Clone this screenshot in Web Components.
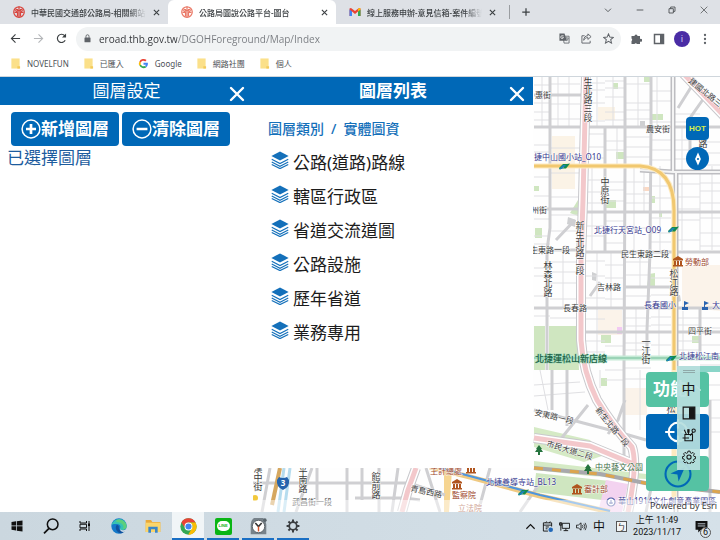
<!DOCTYPE html>
<html lang="zh-Hant">
<head>
<meta charset="utf-8">
<meta name="viewport" content="width=device-width, initial-scale=1">
<title>公路局圖說公路平台-圖台</title>
<style>
  html, body {
    height: 100%;
    margin: 0;
  }

  body {
    background: white;
    font-family: 'Noto Sans', 'Noto Sans CJK TC', sans-serif;
    overflow: hidden;
  }
</style>
</head>
<body>
<eroad-app></eroad-app>

<script>
const ICONS = {
  seal: '<circle cx="12" cy="12" r="10.5" fill="none" stroke="currentColor" stroke-width="2.5"/><path d="M12 1v22M5 6l7 4 7-4M3 13h6v8M21 13h-6v8M4 9l5 3M20 9l-5 3M9 6v5M15 6v5" fill="none" stroke="currentColor" stroke-width="2.4"/>',
  close: '<path d="M5 5l14 14M19 5L5 19" fill="none" stroke="currentColor" stroke-width="3"/>',
  cross: '<path d="M3 3l18 18M21 3L3 21" fill="none" stroke="currentColor" stroke-width="3.6" stroke-linecap="round"/>',
  gmail: '<path d="M1 5v15h5V11l6 5 6-5v9h5V5l-3-1-8 6-8-6z" fill="#ea4335"/><path d="M1 7v13h5V11z" fill="#4285f4"/><path d="M23 7v13h-5V11z" fill="#34a853"/><path d="M18 6v5l5-4V5l-2-1z" fill="#fbbc04"/>',
  plus: '<path d="M12 3v18M3 12h18" fill="none" stroke="currentColor" stroke-width="3"/>',
  chevron: '<path d="M3 8l9 9 9-9" fill="none" stroke="currentColor" stroke-width="2.4"/>',
  caret: '<path d="M3 17l9-9 9 9" fill="none" stroke="currentColor" stroke-width="2.6"/>',
  minimize: '<path d="M2 12h20" fill="none" stroke="currentColor" stroke-width="2.4"/>',
  restore: '<path d="M3 8h13v13H3zM8 8V3h13v13h-5" fill="none" stroke="currentColor" stroke-width="2.4"/>',
  quit: '<path d="M2 2l20 20M22 2L2 22" fill="none" stroke="currentColor" stroke-width="2"/>',
  back: '<path d="M22 12H4M12 3l-9 9 9 9" fill="none" stroke="currentColor" stroke-width="2.4"/>',
  forward: '<path d="M2 12h18M12 3l9 9-9 9" fill="none" stroke="currentColor" stroke-width="2.4"/>',
  reload: '<path d="M20 16a9 9 0 1 1-1-10l2 2" fill="none" stroke="currentColor" stroke-width="2.6"/><path d="M22 1v9h-9z" fill="currentColor"/>',
  lock: '<rect x="4" y="9" width="16" height="13" rx="1.5" fill="currentColor"/><path d="M8 10V6a4 4 0 0 1 8 0v4" fill="none" stroke="currentColor" stroke-width="2.4"/>',
  translate: '<path d="M9 7h13v15H11z" fill="none" stroke="currentColor" stroke-width="1.8"/><path d="M1 1h11l5 16H1z" fill="currentColor"/><path d="M10 6H6.500a3 3 0 1 0 3.200 3.200H7" fill="none" stroke="#fff" stroke-width="1.600"/><path d="M14 11h7M17 9v2M20 11c0 3-2 5-4 6M16 12c1 3 3 4 4 5" fill="none" stroke="currentColor" stroke-width="1.500"/>',
  share: '<path d="M8 6H2v16h18v-5" fill="none" stroke="currentColor" stroke-width="2"/><path d="M15 2l7 6-7 6v-4c-5 0-7 2-9 6 0-6 3-10 9-10z" fill="none" stroke="currentColor" stroke-width="2"/>',
  star: '<path d="M12 2l3 7 7.500.6-5.700 5L18.600 22 12 18l-6.600 4 1.800-7.400-5.700-5L9 9z" fill="none" stroke="currentColor" stroke-width="2.2"/>',
  puzzle: '<path d="M3 6h6a3 3 0 1 1 6 0h5v6a3 3 0 1 1 0 5v5h-6a3 3 0 0 0-5 0H3v-6a3 3 0 0 0 0-5z" fill="currentColor"/>',
  sidebar: '<path d="M3 3h18v18H3z" fill="none" stroke="currentColor" stroke-width="3"/><path d="M14 3h7v18h-7z" fill="currentColor"/>',
  dots: '<circle cx="12" cy="4" r="2.3" fill="currentColor"/><circle cx="12" cy="12" r="2.3" fill="currentColor"/><circle cx="12" cy="20" r="2.3" fill="currentColor"/>',
  folder: '<path d="M3 1h18v22H3z" fill="#fbe08a"/><path d="M16 18h6v5h-6z" fill="#f3ca5a"/>',
  google: '<path d="M21.500 10.500H12v4h5.400A6 6 0 0 1 15 17.300l3.200 2.700c2.700-2.500 3.900-5.800 3.300-9.500z" fill="#4285f4"/><path d="M3 16.600a10 10 0 0 0 15.200 3.400L15 17.300a6 6 0 0 1-8.700-3z" fill="#34a853"/><path d="M3 16.600a10 10 0 0 1 0-9.200l3.300 2.400a6 6 0 0 0 0 4.500z" fill="#fbbc04"/><path d="M3 7.400A10 10 0 0 1 18.700 4.600l-2.900 2.900a6 6 0 0 0-9.500 2.300z" fill="#ea4335"/>',
  add: '<circle cx="12" cy="12" r="10.700" fill="none" stroke="currentColor" stroke-width="1.800"/><path d="M12 6v12M6 12h12" fill="none" stroke="currentColor" stroke-width="3.200"/>',
  remove: '<circle cx="12" cy="12" r="10.700" fill="none" stroke="currentColor" stroke-width="1.800"/><path d="M5.500 12h13" fill="none" stroke="currentColor" stroke-width="3"/>',
  layers: '<path d="M12 0.500l11.500 6L12 12.500l-11.500-6z" fill="currentColor"/><path d="M1 11l11 5.700L23 11M1 14.700l11 5.700 11-5.700M1 18l11 5.500L23 18" fill="none" stroke="currentColor" stroke-width="1.500"/>',
  compass: '<path d="M12 1l5 11-5 11-5-11z" fill="#fff"/><circle cx="12" cy="12" r="1.800" fill="#0068b7"/>',
  target: '<circle cx="12" cy="12" r="8" fill="none" stroke="currentColor" stroke-width="1.800"/><path d="M12 1v8M12 15v8M1 12h8M15 12h8" fill="none" stroke="currentColor" stroke-width="1.800"/>',
  locate: '<circle cx="12" cy="12" r="10.700" fill="none" stroke="currentColor" stroke-width="1.800"/><path d="M18 6L5.500 11.500l6 1 1 6z" fill="currentColor"/>',
  half: '<path d="M2 2h20v20H2z" fill="none" stroke="currentColor" stroke-width="2"/><path d="M12 2h10v20H12z" fill="currentColor"/>',
  pen: '<path d="M5 11h13v11H5zM8 12L4 3M11 11V4M14 13l5-6M1 17h11" fill="none" stroke="currentColor" stroke-width="1.800"/><circle cx="20" cy="4.500" r="2.800" fill="none" stroke="currentColor" stroke-width="1.800"/><path d="M9 2h4v6H9z" fill="currentColor"/>',
  gear: '<path d="M10 1.500h4l.6 3.200 2.300 1 2.700-1.800 2.700 2.700-1.800 2.700 1 2.200 3 .6v3.800l-3 .6-1 2.200 1.800 2.700-2.700 2.700-2.700-1.800-2.300 1-.6 3h-4l-.6-3-2.300-1-2.700 1.800-2.700-2.700 1.800-2.700-1-2.200-3-.6v-3.800l3-.6 1-2.200L1.700 6.600l2.700-2.700 2.700 1.800 2.300-1z" transform="translate(1.200 .6) scale(.9)" fill="none" stroke="currentColor" stroke-width="1.800"/><circle cx="12" cy="12" r="3.600" fill="none" stroke="currentColor" stroke-width="1.800"/>',
  cog: '<circle cx="12" cy="12" r="6.500" fill="none" stroke="currentColor" stroke-width="3"/><path d="M12 1v4M12 19v4M1 12h4M19 12h4M4.200 4.200L7 7M17 17l2.800 2.800M19.800 4.200L17 7M7 17l-2.800 2.800" stroke="currentColor" stroke-width="3.400"/>',
  windows: '<path d="M1 4l9-1.300V11H1zM11.500 2.500L23 1v10H11.500zM1 12.500h9V21l-9-1.300zM11.500 12.500H23V23l-11.500-1.500z" fill="currentColor"/>',
  search: '<circle cx="14.500" cy="9.500" r="8" fill="none" stroke="currentColor" stroke-width="2.300"/><path d="M9 15.500L1.500 23" stroke="currentColor" stroke-width="2.600"/>',
  taskview: '<path d="M2 2v4h13V2M2 22v-4h13v4M2 8.500h13v7H2zM20 2v20" fill="none" stroke="currentColor" stroke-width="2"/><path d="M18 7h4v5h-4z" fill="currentColor"/>',
  edge: '<circle cx="12" cy="12" r="11.500" fill="#1479c9"/><path d="M.7 11A11.500 11.500 0 0 1 23.500 12c0 4-3 6-6.500 6-3 0-4-1.400-3.500-2.700 1.300-1.700 1-5.300-3-6C6 8.500 2 9 .7 11z" fill="#36c2b4"/><path d="M8 3a11.500 11.500 0 0 1 15.500 9c0 4-3 5.500-6 5.500 3-4 .5-11-9.500-11.500z" fill="#69d36b" opacity=".75"/><path d="M9 10c-4 4-1 11 5 12.800 3 .4 6-2 7.500-4.300-3 1.600-9 1.500-9.700-2.600C11.300 13 13 12 9 10z" fill="#11519d"/><path d="M13.500 17c3 2 7 1.500 9 0l1 3-5 1c-3 0-5-2-5-4z" fill="#cfdbe3"/>',
  explorer: '<path d="M1 3h8l2 3h12v15H1z" fill="#e9a93b"/><path d="M1 7h22v14H1z" fill="#fbd56b"/><path d="M5 13h14v9h-4v-5H9v5H5z" fill="#3b86c8"/>',
  chrome: '<circle cx="12" cy="12" r="11.500" fill="#34a853"/><path d="M2 6.200A11.500 11.500 0 0 1 22 6.500H12a5.500 5.500 0 0 0-5 8z" fill="#ea4335"/><path d="M22 6.500A11.500 11.500 0 0 1 11.500 23.500l5-8.500A5.500 5.500 0 0 0 14 6.500z" fill="#fbbc04"/><circle cx="12" cy="12" r="5.600" fill="#fff"/><circle cx="12" cy="12" r="4.300" fill="#4285f4"/>',
  clock: '<path d="M1 23V9a11 11 0 0 1 22 0v14z" fill="#77828a"/><circle cx="12" cy="12" r="8.800" fill="#fff" stroke="#4d565c" stroke-width="1.200"/><path d="M7.500 7l4.500 5 4.500-5" fill="none" stroke="#333" stroke-width="2.200"/><path d="M12 12v7" stroke="#d9572d" stroke-width="2"/><circle cx="21" cy="3" r="2.500" fill="#59646b"/>',
  input: '<path d="M13 22H3V4h18v8M3 9h18" fill="none" stroke="currentColor" stroke-width="2"/><path d="M8 4l2-3M16 4l2-3M8 13h7M8 17h4" stroke="currentColor" stroke-width="2"/><circle cx="19" cy="19" r="5" fill="#2067b8"/>',
  network: '<path d="M7 5h16v11H7zM15 16v5M10 21h10M4 3v18M1 4h5v5H1z" fill="none" stroke="currentColor" stroke-width="2"/>',
  sound: '<path d="M1 9h4l6-5v16l-6-5H1z" fill="none" stroke="currentColor" stroke-width="1.800"/><path d="M14 9q2 3 0 6M17 6q4.500 6 0 12M20 4q6 8 0 16" fill="none" stroke="currentColor" stroke-width="1.600"/>',
  notice: '<path d="M1 2h22v16H11l-5 5v-5H1z" fill="currentColor"/><path d="M5 7h14M5 11h14" stroke="#cfdbe4" stroke-width="1.600"/>'
};

class Icon extends HTMLElement {
  static get observedAttributes() {
    return [ 'name' ];
  }

  constructor() {
    super();
    this.attachShadow( {mode: 'open'} );
  }

  attributeChangedCallback( name, old, value ) {
    this.shadowRoot.innerHTML = `
      <style>
        :host { display: inline-block; flex: none; height: 12px; width: 12px; }
        svg { display: block; height: 100%; width: 100%; }
      </style>
      <svg viewBox="0 0 24 24" aria-hidden="true">${ICONS[value]}</svg>
    `;
  }
}

window.customElements.define( 'er-icon', Icon );

// One tab of the browser window
class BrowserTab extends HTMLElement {
  constructor() {
    super();
    this.attachShadow( {mode: 'open'} ).innerHTML = `
      <style>
        :host {
          align-items: center;
          box-sizing: border-box;
          color: #3c4043;
          display: flex;
          flex: 0 1 168px;
          font-size: 8px;
          gap: 6px;
          min-width: 0;
          padding: 0 7px 0 13px;
        }
        :host( [active] ) {
          background: white;
          border-radius: 6px 6px 0 0;
        }
        button {
          background: none;
          border: none;
          color: inherit;
          font: inherit;
          padding: 0;
        }
        .title {
          flex: 1;
          font-weight: 500;
          -webkit-mask-image: linear-gradient( to right, black 85%, transparent );
          mask-image: linear-gradient( to right, black 85%, transparent );
          min-width: 0;
          overflow: hidden;
          text-align: left;
          white-space: nowrap;
        }
        .close er-icon { display: block; height: 9px; width: 9px; }
      </style>
      <slot name="icon"></slot>
      <button class="title" type="button"><slot></slot></button>
      <button class="close" type="button" aria-label="關閉"><er-icon name="close"></er-icon></button>
    `;
  }
}

window.customElements.define( 'browser-tab', BrowserTab );

class BrowserChrome extends HTMLElement {
  constructor() {
    super();
    this.attachShadow( {mode: 'open'} ).innerHTML = `
      <style>
        :host { background: white; color: #3c4043; display: block; }
        button { background: none; border: none; color: inherit; display: flex; font: inherit; padding: 0; }
        .tabs { background: #dee1e6; display: flex; height: 24px; }
        .tabs .new { align-items: center; border-left: 1px solid #9a9da1; height: 14px; margin: 5px 0 5px 5px; padding-left: 11px; }
        .new er-icon { height: 10px; width: 10px; }
        .red { color: #d8463f; }
        .pale { color: #ea7a68; }
        .window { display: flex; align-items: center; gap: 24px; height: 20px; margin-left: auto; padding-right: 12px; }
        .window er-icon { height: 8px; width: 8px; }
        .bar { align-items: center; display: flex; gap: 9px; height: 29px; padding: 0 9px 0 10px; }
        .nav { display: flex; gap: 12px; }
        .nav er-icon { height: 11px; width: 11px; }
        .nav .off { color: #b4b6b9; }
        .address { align-items: center; background: #f1f3f4; border-radius: 12px; display: flex; flex: 1; gap: 11px; height: 24px; padding: 0 7px; }
        .address > er-icon { height: 9px; margin-right: -4px; width: 9px; color: #5f6368; }
        .address button { color: #5f6368; }
        .address button er-icon { height: 11px; width: 11px; }
        input {
          -webkit-background-clip: text;
          -webkit-text-fill-color: transparent;
          background-clip: text;
          background-image: linear-gradient( to right, #303236 78px, #777a7f 78px );
          border: none;
          color: #303236;
          flex: 1;
          font-family: 'Open Sans', sans-serif;
          font-size: 10px;
          min-width: 0;
          outline: none;
          padding: 0;
        }
        .tools { align-items: center; color: #5f6368; display: flex; gap: 11px; }
        .avatar { align-items: center; background: #4a2ca5; border-radius: 50%; color: #d7ccf2; font-size: 9px; height: 16px; justify-content: center; margin: 0 -2px; width: 16px; }
        nav { align-items: center; border-bottom: 1px solid #cfd6dc; display: flex; font-size: 8px; gap: 14px; height: 21px; padding: 0 0 2px 10px; }
        a { align-items: center; color: #4d5156; display: flex; gap: 6px; text-decoration: none; }
        nav er-icon { height: 11px; width: 11px; }
      </style>
      <div class="tabs">
        <browser-tab><er-icon slot="icon" name="seal" class="red"></er-icon>中華民國交通部公路局-相關網站</browser-tab>
        <browser-tab active><er-icon slot="icon" name="seal" class="pale"></er-icon>公路局圖說公路平台-圖台</browser-tab>
        <browser-tab><er-icon slot="icon" name="gmail"></er-icon>線上服務申辦-意見信箱-案件編號</browser-tab>
        <button class="new" type="button" aria-label="新分頁"><er-icon name="plus"></er-icon></button>
        <div class="window">
          <button type="button" aria-label="搜尋分頁"><er-icon name="chevron"></er-icon></button>
          <button type="button" aria-label="最小化"><er-icon name="minimize"></er-icon></button>
          <button type="button" aria-label="還原"><er-icon name="restore"></er-icon></button>
          <button type="button" aria-label="關閉視窗"><er-icon name="quit"></er-icon></button>
        </div>
      </div>
      <div class="bar">
        <div class="nav">
          <button type="button" aria-label="上一頁"><er-icon name="back"></er-icon></button>
          <button type="button" aria-label="下一頁" class="off"><er-icon name="forward"></er-icon></button>
          <button type="button" aria-label="重新載入"><er-icon name="reload"></er-icon></button>
        </div>
        <div class="address">
          <er-icon name="lock"></er-icon>
          <input type="text" aria-label="網址" value="eroad.thb.gov.tw/DGOHForeground/Map/Index">
          <button type="button" aria-label="翻譯"><er-icon name="translate"></er-icon></button>
          <button type="button" aria-label="分享"><er-icon name="share"></er-icon></button>
          <button type="button" aria-label="加入書籤"><er-icon name="star"></er-icon></button>
        </div>
        <div class="tools">
          <button type="button" aria-label="擴充功能"><er-icon name="puzzle"></er-icon></button>
          <button type="button" aria-label="側邊面板"><er-icon name="sidebar"></er-icon></button>
          <button type="button" class="avatar">i</button>
          <button type="button" aria-label="選單"><er-icon name="dots"></er-icon></button>
        </div>
      </div>
      <nav>
        <a href="#"><er-icon name="folder"></er-icon>NOVELFUN</a>
        <a href="#"><er-icon name="folder"></er-icon>已匯入</a>
        <a href="#"><er-icon name="google"></er-icon>Google</a>
        <a href="#"><er-icon name="folder"></er-icon>網路社團</a>
        <a href="#"><er-icon name="folder"></er-icon>個人</a>
      </nav>
    `;
  }
}

window.customElements.define( 'browser-chrome', BrowserChrome );

// White panel with a blue title bar
class SidePanel extends HTMLElement {
  constructor() {
    super();
    this.attachShadow( {mode: 'open'} ).innerHTML = `
      <style>
        :host { background: white; display: block; }
        header {
          align-items: center;
          background: #0068b7;
          color: white;
          display: grid;
          grid-template-columns: 32px 1fr 32px;
          height: 28px;
        }
        h2 { font-size: 17px; font-weight: var( --title-weight, 400 ); grid-column: 2; line-height: 28px; margin: 0; text-align: center; }
        button { background: none; border: none; color: inherit; padding: 6px 8px 0; }
        er-icon { display: block; height: 16px; width: 16px; }
      </style>
      <header>
        <h2><slot name="title"></slot></h2>
        <button type="button" aria-label="關閉"><er-icon name="cross"></er-icon></button>
      </header>
      <slot></slot>
    `;
  }
}

window.customElements.define( 'side-panel', SidePanel );

class LayerButton extends HTMLElement {
  constructor() {
    super();
    this.attachShadow( {mode: 'open'} ).innerHTML = `
      <style>
        :host { display: block; flex: 1; }
        button {
          align-items: center;
          background: #0068b7;
          border: none;
          border-radius: 4px;
          color: white;
          display: flex;
          font-family: inherit;
          font-size: 17px;
          font-weight: 700;
          height: 34px;
          justify-content: center;
          padding: 0 0 4px;
          white-space: nowrap;
          width: 100%;
        }
        er-icon { height: 20px; margin-top: 4px; width: 20px; }
      </style>
      <button type="button"><er-icon></er-icon><slot></slot></button>
    `;
  }

  connectedCallback() {
    this.shadowRoot.querySelector( 'er-icon' ).setAttribute( 'name', this.getAttribute( 'icon' ) );
  }
}

window.customElements.define( 'layer-button', LayerButton );

class LayerItem extends HTMLElement {
  constructor() {
    super();
    this.attachShadow( {mode: 'open'} ).innerHTML = `
      <style>
        :host { display: block; }
        a { align-items: center; box-sizing: border-box; color: #1c1c1c; display: flex; font-size: 17px; gap: 4px; height: 34px; padding-bottom: 6px; text-decoration: none; }
        er-icon { color: #1470ba; height: 18px; margin-bottom: 3px; width: 18px; }
      </style>
      <a href="#"><er-icon name="layers"></er-icon><slot></slot></a>
    `;
  }
}

window.customElements.define( 'layer-item', LayerItem );

// Street map, in its own canvas coordinates
const AREAS = [
  [ '#fbf3e6', '552,136 575,136 575,189 552,189' ],
  [ '#fbf3e6', '598,107 615,107 615,120 598,120' ],
  [ '#fbf3ea', '682,265 720,265 720,311 682,307' ],
  [ '#fbf3ea', '598,310 622,310 622,335 598,335' ],
  [ '#fbf3ea', '623,388 647,388 647,415 623,415' ],
  [ '#cfe6c0', '534,326 545,326 545,370 534,370' ],
  [ '#cfe6c0', '549,326 577,326 579,370 549,370' ],
  [ '#cfe6c0', '613,83 618,83 618,89 613,89' ],
  [ '#cfe6c0', '644,76 651,76 651,82 644,82' ],
  [ '#cfe6c0', '651,114 663,114 663,120 651,120' ],
  [ '#cfe6c0', '616,152 624,152 624,159 616,159' ],
  [ '#cfe6c0', '606,200 616,200 616,208 606,208' ],
  [ '#cfe6c0', '534,186 539,186 539,191 534,191' ],
  [ '#cfe6c0', '578,200 578,216 570,213' ],
  [ '#cfe6c0', '535,228 542,228 542,238 535,238' ],
  [ '#cfe6c0', '659,211 662,211 662,217 659,217' ],
  [ '#cfe6c0', '649,274 655,273 655,286 647,286' ],
  [ '#cfe6c0', '601,335 611,335 611,343 601,343' ],
  [ '#cfe6c0', '692,336 700,336 700,343 692,343' ],
  [ '#cfe6c0', '601,378 607,378 607,386 601,386' ],
  [ '#cfe6c0', '649,196 655,196 655,203 649,203' ],
  [ '#d5eac5', '534,427 590,440 602,456 584,462 534,447' ],
  [ '#d5eac5', '534,461 646,474 646,479 590,476 534,470' ],
  [ '#cfe6c0', '536,473 610,481 602,500 534,492' ],
  [ '#f3d3f0', '606,480 628,484 622,512 598,512' ],
  [ '#f2c9f3', '617,327 622,327 622,334 617,334' ],
  [ '#f6d591', '444,470 452,470 449,512 444,512' ],
  [ '#8ad5c8', '680,366 720,366 720,372 680,372' ],
  [ '#cfd0d2', '568,217 576,220 575,227 567,224' ],
  [ '#cfd0d2', '673,296 680,295 681,301 674,303' ],
  [ '#cfd0d2', '592,272 597,274 596,281 592,280' ],
  [ '#cfd0d2', '640,121 645,121 645,127 640,127' ],
  [ '#fbd9c4', '643,187 649,187 649,191 643,191' ]
];

// column left, column right, y of each lane in it
const LANES = [
  [ 534, 550, [ 85, 103, 112, 120, 145, 152, 177, 196, 219, 236, 244, 268, 276, 296, 316 ] ],
  [ 550, 580, [ 84, 104, 119, 148, 173, 197, 215, 231, 262, 272, 283, 299, 318 ] ],
  [ 586, 605, [ 83, 90, 103, 121, 134, 147, 158, 180, 192, 203, 226, 236, 261, 276, 298, 319, 341, 352 ] ],
  [ 605, 625, [ 81, 88, 97, 112, 120, 141, 150, 182, 190, 201, 221, 233, 243, 265, 278, 299, 346, 370, 380 ] ],
  [ 625, 651, [ 84, 103, 110, 119, 137, 147, 157, 182, 194, 203, 228, 262, 275, 296, 318, 326, 343, 350, 368, 379 ] ],
  [ 651, 671, [ 91, 101, 122, 140, 150, 160, 186, 198, 218, 233, 242, 268, 278, 295, 302, 317, 325, 345, 375 ] ],
  [ 675, 700, [ 114, 122, 140, 150, 159, 184, 197, 209, 220, 240, 318, 325, 341, 350 ] ],
  [ 700, 720, [ 142, 153, 165, 183, 191, 203, 218, 233, 246, 318, 328, 345, 365, 385, 400, 418, 432 ] ]
];

const ROADS = [
  'M550 76V228L547 250V370', 'M605 127V252', 'M625 76V166L624 370V460',
  'M651 76V127L650 252L647 330V358', 'M700 308V360', 'M534 127H720', 'M534 95H583',
  'M534 209H583', 'M586 212H720', 'M585 252H720', 'M534 250H583', 'M625 287H671', 'M534 308H720',
  'M583 332H720', 'M534 410L625 434L646 440', 'M552 370V410', 'M567 370V426', 'M588 405L560 440',
  'M608 434L618 420L625 400', 'M710 400V512', 'M646 512L655 470', 'M693 84L678 108', 'M704 98L690 118V166', 'M590 296L600 282', 'M556 240L575 220',
  'M270 468L262 512', 'M312 468L296 512', 'M347 468V512', 'M379 468V512', 'M253 483H412', 'M317 468V505', 'M398 468L392 512',
  'M355 498H405L420 500', 'M412 484L445 495', 'M362 468V500', 'M426 468L440 512', 'M490 468L480 505', 'M540 483L520 512'
];

const AVENUES = 'M586 76L583 200L581 260V340Q583 372 597 400Q612 425 632 447Q638 465 628 512M680 70L726 118M534 438L590 446L636 465M416 468L408 490L402 512';

const STREETS = [
  [ 535, 98, '惠街' ], [ 646, 132, '農安街' ], [ 523, 213, '錦州街' ], [ 522, 253, '民生東路一段' ],
  [ 621, 257, '民生東路二段' ], [ 597, 290, '吉林路' ], [ 563, 311, '長春路' ], [ 688, 334, '四平街' ],
  [ 588, 68, '新生北路三段', 'v' ], [ 605, 177, '中原街', 'v' ], [ 580, 221, '新生北路二段', 'v' ], [ 548, 261, '林森北路', 'v' ],
  [ 674, 269, '松江路', 'v' ], [ 646, 337, '一江街', 'v' ], [ 703, 139, '路', 'v' ],
  [ 671, 404, '松江路', 'v' ], [ 376, 472, '館前路', 'v' ],
  [ 688, 82, '建國北路三段', 39 ], [ 534, 415, '安東路一段', 13 ], [ 546, 446, '市民大道二段', 17 ], [ 595, 410, '新生北路一段', 51 ],
  [ 410, 491, '青島西路', 12 ], [ 292, 505, '武昌街一段' ], [ 258, 464, '漢中街', 'v' ], [ 303, 457, '延平南路', 'v' ]
];

const PLACES = [
  [ 534, 160, '捷中山國小站_O10', '#35378f' ], [ 594, 233, '北捷行天宮站_O09', '#35378f' ], [ 644, 308, '長春國小', '#35378f' ],
  [ 712, 308, '大', '#35378f' ], [ 679, 359, '北捷松江南京站', '#35378f' ], [ 486, 485, '北捷善導寺站_BL13', '#35378f' ],
  [ 618, 504, '華山1914文化創意產業園區', '#35378f' ], [ 685, 265, '勞動部', '#a0482c' ], [ 584, 492, '審計部', '#a0482c' ],
  [ 430, 474, '主計總處', '#a0482c' ], [ 452, 498, '監察院', '#a0482c' ], [ 458, 511, '立法院', '#a0482c' ],
  [ 595, 470, '中央藝文公園', '#3f7048' ]
];

const MARKS = {
  hall: '<path d="M-5-2L0-5l5 3v1.500H-5zM-4 0h2v4h-2zM-1 0h2v4h-2zM2 0h2v4H2zM-5 4H5v1.500H-5z" fill="#b0551e"/>',
  metro: '<path d="M-5 2l4-4h5L1 1h-3L-4 4zM-1 2l4-4 3-.5-4 5h-5z" fill="#138a50"/><path d="M-5 3l4-4h3l-4 4z" fill="#1b82b8"/>',
  tree: '<path d="M0-5L3-1H2L4 2H1v3h-2V2h-3l2-3h-1z" fill="#25733e"/>',
  flag: '<path d="M-1-5l5 2-4 2v2h3v3h-6V1h2z" fill="#2a64b0"/>',
  shield: '<path d="M-4-6Q0-4 4-6L6-3Q7 4 0 7-7 4-6-3z" fill="#2463ad"/><text y="3" text-anchor="middle" font-size="8" font-weight="700" fill="#fff">3</text>',
  ring: '<circle r="4" fill="#fff" stroke="#4a5aa5" stroke-width="1.200"/><path d="M-2 1h4M0-2v4" stroke="#4a5aa5"/>'
};

const PINS = [
  [ 'metro', 564, 166 ], [ 'metro', 673, 229 ], [ 'metro', 671, 358 ], [ 'metro', 523, 492 ],
  [ 'hall', 678, 261 ], [ 'hall', 577, 489 ], [ 'hall', 457, 484 ], [ 'hall', 471, 468 ],
  [ 'flag', 685, 306 ], [ 'flag', 705, 306 ], [ 'tree', 539, 450 ], [ 'tree', 588, 469 ],
  [ 'shield', 283, 483 ], [ 'ring', 611, 502 ]
];

class StreetMap extends HTMLElement {
  constructor() {
    super();
    const lanes = LANES.map( ( [ left, right, ys ] ) => ys.map( ( y ) => `M${left} ${y}H${right}` ).join( '' ) ).join( '' );
    const streets = STREETS.map( ( [ x, y, text, turn ] ) => {
      if( turn === 'v' ) {
        return `<text class="down" x="${x}" y="${y}">${text}</text>`;
      }
      return `<text transform="translate( ${x} ${y} ) rotate( ${turn || 0} )">${text}</text>`;
    } ).join( '' );

    this.attachShadow( {mode: 'open'} ).innerHTML = `
      <style>
        :host { display: block; overflow: hidden; }
        svg { display: block; height: 100%; width: 100%; }
        text { font-family: 'Noto Sans', 'Noto Sans CJK TC', sans-serif; font-size: 8px; paint-order: stroke; stroke: white; stroke-opacity: .8; stroke-width: 1px; }
        .streets { fill: #3c3c3c; }
        .down { font-size: 9px; writing-mode: vertical-rl; }
        .pins text { stroke: none; }
        .line { fill: #1c5f45; font-size: 9px; font-weight: 500; stroke: #9bd9b8; }
      </style>
      <svg viewBox="253 77 467 435" preserveAspectRatio="xMinYMin slice" role="img" aria-label="地圖">
        <rect x="253" y="77" width="467" height="435" fill="#fefefe"/>
        ${AREAS.map( ( [ fill, points ] ) => `<polygon fill="${fill}" points="${points}"/>` ).join( '' )}
        <path d="${lanes}M558 77V127M569 76V127M597 76V127M613 76V127M638 76V127M592 166V250M634 166V252M617 127V166M644 166V212M660 166V252M657 77V127M682 127V250M700 166V250M712 166V250M636 308V358M659 308V358M640 252V287M683 311V358M597 252V358M611 252V308M563 250V308M640 370V430M542 77V127M534 385L580 382M534 396L585 392M540 370L548 410M600 370V388" fill="none" stroke="#e0e0e3"/>
        <path d="${ROADS.join( '' )}" fill="none" stroke="#cfcfd2" stroke-width="3"/>
        <path d="M673 76V172M640 170L673 172H720M676 172V512" fill="none" stroke="#bdbdc1" stroke-width="5"/>
        <path d="M673 76V172M640 170L673 172H720M676 172V512" fill="none" stroke="#f4f4f4" stroke-width="2"/>
        <g fill="none" stroke-linejoin="round">
          <path d="${AVENUES}" stroke="#c8c8cc" stroke-width="10"/>
          <path d="${AVENUES}" stroke="#fff" stroke-width="8"/>
          <path d="${AVENUES}" stroke="#f3c8cb" stroke-width="5"/>
          <path d="M534 166H640Q674 168 674 210V500" stroke="#fdeac0" stroke-width="5"/>
          <path d="M534 166H640Q674 168 674 210V370" stroke="#f1c870" stroke-width="3"/>
          <path d="M534 358H720" stroke="#c5ead6" stroke-width="5"/>
          <path d="M534 358H720" stroke="#72bd98" stroke-width="1"/>
          <path d="M534 468L600 474L650 484L720 492" stroke="#a8a8ac" stroke-width="4"/>
          <path d="M534 468L600 474L650 484L720 492" stroke="#dca54e" stroke-width="3" stroke-dasharray="9 9"/>
          <path d="M430 467L470 477L540 496L610 512" stroke="#efc982" stroke-width="5"/>
          <path d="M440 468L540 495L610 511" stroke="#4d95de" stroke-width="2"/>
          <path d="M284 468L278 512M290 468L284 512" stroke="#b6dcee" stroke-width="3"/>
          <path d="M280 468L272 505" stroke="#d5a75f" stroke-width="4"/>
        </g>
        <circle cx="255" cy="498" r="3" fill="#f2c83c"/>
        <g class="streets">${streets}</g>
        ${PLACES.map( ( [ x, y, text, fill ] ) => `<text x="${x}" y="${y}" fill="${fill}">${text}</text>` ).join( '' )}
        <text class="line" x="535" y="362">北捷運松山新店線</text>
        <g class="pins">${PINS.map( ( [ mark, x, y ] ) => `<g transform="translate( ${x} ${y} )">${MARKS[mark]}</g>` ).join( '' )}</g>
      </svg>
    `;
  }
}

window.customElements.define( 'street-map', StreetMap );

// Buttons that float on the right edge of the map
class MapTools extends HTMLElement {
  constructor() {
    super();
    this.attachShadow( {mode: 'open'} ).innerHTML = `
      <style>
        :host { align-items: flex-end; display: flex; flex-direction: column; justify-content: space-between; }
        div { align-items: center; display: flex; flex-direction: column; gap: 7px; }
        button { align-items: center; background: #0068b7; border: none; border-radius: 4px; color: white; display: flex; font-family: inherit; justify-content: center; padding: 0; }
        .small button { height: 23px; width: 23px; }
        .small .hot { color: #d6ee4c; font-family: 'Liberation Sans', sans-serif; font-size: 8px; font-weight: 700; }
        .small .round { border-radius: 50%; }
        .small er-icon { height: 14px; width: 14px; }
        .large button { font-size: 17px; font-weight: 700; gap: 3px; height: 35px; width: 63px; }
        .large .menu { padding-bottom: 4px; }
        .large .teal { background: #55c2a3; }
        .large er-icon { height: 28px; width: 28px; }
        .large .teal er-icon { color: #0068b7; }
        .large .teal .caret { color: white; height: 12px; width: 12px; }
      </style>
      <div class="small">
        <button type="button" class="hot">HOT</button>
        <button type="button" class="round" aria-label="指北"><er-icon name="compass"></er-icon></button>
      </div>
      <div class="large">
        <button type="button" class="teal menu">功能<er-icon name="caret" class="caret"></er-icon></button>
        <button type="button" aria-label="定位"><er-icon name="target"></er-icon></button>
        <button type="button" class="teal" aria-label="目前位置"><er-icon name="locate"></er-icon></button>
      </div>
    `;
  }
}

window.customElements.define( 'map-tools', MapTools );

class InputBar extends HTMLElement {
  constructor() {
    super();
    this.attachShadow( {mode: 'open'} ).innerHTML = `
      <style>
        :host {
          align-items: center;
          background: rgba( 183, 223, 222, .93 );
          box-sizing: border-box;
          color: #161616;
          display: flex;
          flex-direction: column;
          height: 104px;
          justify-content: space-between;
          padding: 4px 0 6px;
          width: 23px;
        }
        button { background: none; border: none; color: inherit; display: block; font: 14px/16px 'Noto Sans', 'Noto Sans CJK TC', sans-serif; padding: 0; }
        i { border: solid #8fa9a9; border-width: 1px 0; height: 1px; width: 12px; }
        er-icon { display: block; height: 14px; width: 14px; }
      </style>
      <i></i>
      <button type="button">中</button>
      <button type="button" aria-label="半形"><er-icon name="half"></er-icon></button>
      <button type="button" aria-label="手寫"><er-icon name="pen"></er-icon></button>
      <button type="button" aria-label="設定"><er-icon name="gear"></er-icon></button>
    `;
  }
}

window.customElements.define( 'input-bar', InputBar );

class TaskBar extends HTMLElement {
  constructor() {
    super();
    this.attachShadow( {mode: 'open'} ).innerHTML = `
      <style>
        :host { background: linear-gradient( to right, #cbd7df, #d5e1e9 ); color: #111; display: flex; height: 28px; justify-content: space-between; }
        div { align-items: center; display: flex; }
        button { align-items: center; background: none; border: none; box-sizing: border-box; color: inherit; display: flex; font: inherit; height: 28px; justify-content: center; padding: 0; }
        .pinned button { width: 34px; }
        .pinned er-icon { height: 16px; width: 16px; }
        .pinned .slim er-icon { height: 12px; width: 12px; }
        .running { gap: 3px; margin-left: 2px; }
        .running button { border-bottom: 2px solid #1a6fc4; padding-top: 2px; width: 32px; }
        .running .active { background: #f1f5f7; }
        .running er-icon { height: 17px; width: 17px; }
        .running .cog { color: #3a3d40; height: 14px; width: 14px; }
        .line { align-items: center; background: #0ab515; border-radius: 2px; display: flex; height: 17px; justify-content: center; width: 17px; }
        .line b { background: white; border-radius: 6px; color: #0ab515; font: 700 4px/10px 'Liberation Sans', sans-serif; width: 13px; }
        .tray { gap: 6px; padding-right: 12px; }
        .tray er-icon { height: 11px; width: 11px; }
        .word { font: 12px/14px 'Noto Sans CJK TC', sans-serif; }
        .tray .box { background: #f2f5f7; border: 1px solid #555; font-size: 8px; height: 11px; margin: 0 0 0 5px; width: 11px; }
        time { font: 9px/12px Roboto, 'Noto Sans CJK TC', sans-serif; padding-bottom: 1px; text-align: center; }
        .tray .notes { margin-left: 8px; position: relative; }
        .tray .notes er-icon { height: 13px; width: 13px; }
        .count { background: #dde6ec; border: 1px solid #555; border-radius: 50%; bottom: 2px; font: 9px/9px Roboto, sans-serif; height: 9px; left: 5px; position: absolute; text-align: center; width: 9px; }
      </style>
      <div>
        <div class="pinned">
          <button type="button" class="slim" aria-label="開始"><er-icon name="windows"></er-icon></button>
          <button type="button" aria-label="搜尋"><er-icon name="search"></er-icon></button>
          <button type="button" class="slim" aria-label="工作檢視"><er-icon name="taskview"></er-icon></button>
          <button type="button" aria-label="Edge"><er-icon name="edge"></er-icon></button>
          <button type="button" aria-label="檔案總管"><er-icon name="explorer"></er-icon></button>
        </div>
        <div class="running">
          <button type="button" class="active" aria-label="Chrome"><er-icon name="chrome"></er-icon></button>
          <button type="button"><span class="line"><b>LINE</b></span></button>
          <button type="button" aria-label="時鐘"><er-icon name="clock"></er-icon></button>
          <button type="button" aria-label="設定"><er-icon name="cog" class="cog"></er-icon></button>
        </div>
      </div>
      <div class="tray">
        <button type="button" aria-label="顯示隱藏的圖示"><er-icon name="caret"></er-icon></button>
        <button type="button" aria-label="輸入"><er-icon name="input"></er-icon></button>
        <button type="button" aria-label="網路"><er-icon name="network"></er-icon></button>
        <button type="button" aria-label="音量"><er-icon name="sound"></er-icon></button>
        <button type="button" class="word">中</button>
        <button type="button" class="box">ㄅ</button>
        <time datetime="2023-11-17T11:49">上午 11:49<br>2023/11/17</time>
        <button type="button" class="notes"><er-icon name="notice"></er-icon><span class="count">6</span></button>
      </div>
    `;
  }
}

window.customElements.define( 'task-bar', TaskBar );

class App extends HTMLElement {
  constructor() {
    super();
    this.attachShadow( {mode: 'open'} ).innerHTML = `
      <style>
        :host { display: flex; flex-direction: column; height: 100vh; }
        main { display: grid; flex: 1; grid-template-columns: 253fr 467fr; grid-template-rows: minmax( 0, 1fr ); min-height: 0; }
        .actions { display: flex; gap: 3px; padding: 7px 23px 0 11px; }
        .chosen { color: #1d5c9e; font-size: 17px; line-height: 24px; margin: 0; padding-left: 7px; }
        .stage { position: relative; }
        street-map { height: 100%; }
        .list { --title-weight: 700; bottom: 44px; left: 0; position: absolute; top: 0; width: 60%; }
        .path { color: #1470ba; display: flex; font-size: 14px; font-weight: 500; gap: 7px; line-height: 20px; padding: 14px 15px 8px; }
        .path a { color: inherit; text-decoration: none; }
        .items { padding: 0 18px; }
        map-tools { bottom: 21px; position: absolute; right: 11px; top: 40px; }
        input-bar { bottom: 42px; position: absolute; right: 20px; }
        .credit { background: rgba( 255, 255, 255, .5 ); bottom: 0; box-sizing: border-box; color: #333; font: 9px/12px 'Open Sans', sans-serif; left: 0; padding-right: 3px; position: absolute; right: 0; text-align: right; }
      </style>
      <browser-chrome></browser-chrome>
      <main>
        <side-panel>
          <span slot="title">圖層設定</span>
          <div class="actions">
            <layer-button icon="add">新增圖層</layer-button>
            <layer-button icon="remove">清除圖層</layer-button>
          </div>
          <p class="chosen">已選擇圖層</p>
        </side-panel>
        <div class="stage">
          <street-map></street-map>
          <div class="credit">Powered by Esri</div>
          <side-panel class="list">
            <span slot="title">圖層列表</span>
            <div class="path"><a href="#">圖層類別</a><span>/</span><a href="#">實體圖資</a></div>
            <div class="items">
              <layer-item>公路(道路)路線</layer-item>
              <layer-item>轄區行政區</layer-item>
              <layer-item>省道交流道圖</layer-item>
              <layer-item>公路設施</layer-item>
              <layer-item>歷年省道</layer-item>
              <layer-item>業務專用</layer-item>
            </div>
          </side-panel>
          <map-tools></map-tools>
          <input-bar></input-bar>
        </div>
      </main>
      <task-bar></task-bar>
    `;
  }
}

window.customElements.define( 'eroad-app', App );
</script>
</body>
</html>
